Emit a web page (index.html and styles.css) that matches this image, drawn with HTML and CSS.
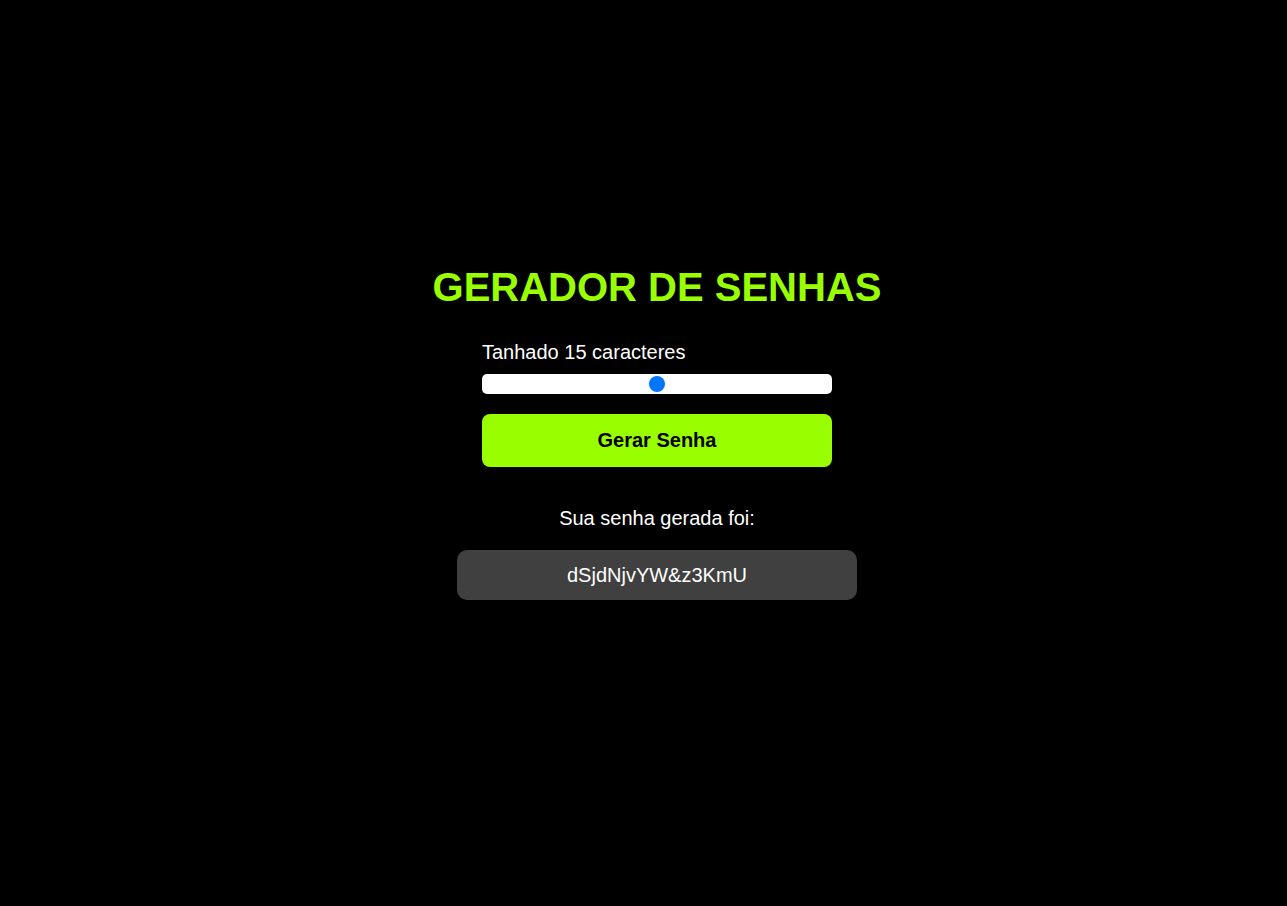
FILE: index.html
```html
<!DOCTYPE html>
<html lang="pt-BR">
<head>
<meta charset="utf-8">
<title>Gerador de Senhas</title>
<link rel="stylesheet" href="styles.css">
</head>
<body>
<main class="app">
  <h1 class="title">GERADOR DE SENHAS</h1>
  <div class="controls">
    <label class="size-label" for="size">Tanhado <span>15</span> caracteres</label>
    <input class="slider" id="size" type="range" min="6" max="24" value="15">
    <button class="generate">Gerar Senha</button>
  </div>
  <p class="result-label">Sua senha gerada foi:</p>
  <div class="password">dSjdNjvYW&amp;z3KmU</div>
</main>
</body>
</html>
```
FILE: styles.css
```css
html, body {
  margin: 0;
  padding: 0;
  background: #000;
  height: 100%;
}
body {
  font-family: "Liberation Sans", Arial, sans-serif;
  color: #fff;
}
.app {
  display: flex;
  flex-direction: column;
  align-items: center;
  padding-top: 264px;
  padding-left: 27px;
}
.title {
  margin: 0;
  font-size: 40px;
  line-height: 46px;
  font-weight: bold;
  color: #99ff00;
}
.controls {
  width: 350px;
  display: flex;
  flex-direction: column;
  margin-top: 31px;
}
.size-label {
  font-size: 20px;
  line-height: 23px;
}
.slider {
  -webkit-appearance: none;
  appearance: none;
  margin: 10px 0 0 0;
  width: 350px;
  height: 20px;
  background: #fff;
  border-radius: 5px;
  outline: none;
}
.slider::-webkit-slider-thumb {
  -webkit-appearance: none;
  appearance: none;
  width: 16px;
  height: 16px;
  border-radius: 50%;
  background: #0075ff;
  border: none;
}
.generate {
  margin-top: 20px;
  height: 53px;
  border: none;
  border-radius: 8px;
  background: #99ff00;
  color: #000;
  font-family: inherit;
  font-size: 20px;
  font-weight: bold;
  cursor: pointer;
}
.result-label {
  margin: 40px 0 0 0;
  font-size: 20px;
  line-height: 23px;
}
.password {
  margin-top: 20px;
  width: 400px;
  height: 50px;
  box-sizing: border-box;
  background: #404040;
  border-radius: 10px;
  display: flex;
  align-items: center;
  justify-content: center;
  font-size: 20px;
}
```
